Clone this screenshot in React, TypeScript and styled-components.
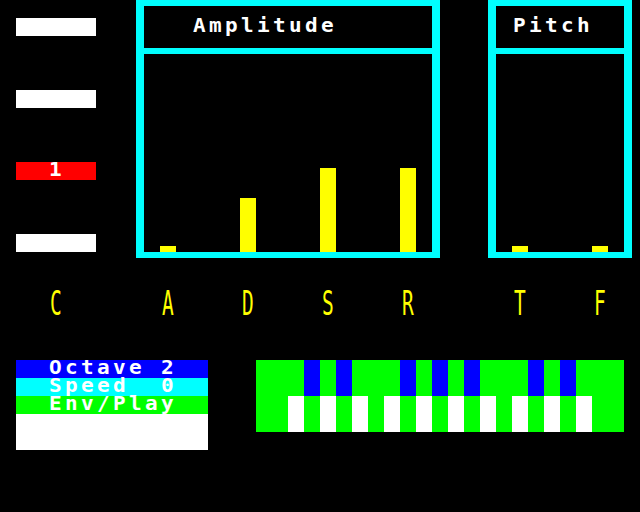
import React from "react";
import styled, { createGlobalStyle, css } from "styled-components";

const Global = createGlobalStyle`
  html, body { margin: 0; padding: 0; background: #000; }
`;

const CYAN = "#00ffff";
const YELLOW = "#ffff00";
const RED = "#ff0000";
const BLUE = "#0000ff";
const GREEN = "#00ff00";
const WHITE = "#ffffff";

type Place = { $col: number; $row: number; $w?: number; $h?: number };

const place = css<Place>`
  grid-column: ${(p) => p.$col + 1} / span ${(p) => p.$w ?? 1};
  grid-row: ${(p) => p.$row + 1} / span ${(p) => p.$h ?? 1};
`;

const Screen = styled.div`
  display: grid;
  grid-template-columns: repeat(40, 16px);
  grid-template-rows: repeat(28, 18px);
  width: 640px;
  height: 512px;
  overflow: hidden;
  background: #000;
  color: ${WHITE};
  font-family: "DejaVu Sans Mono", "Liberation Mono", monospace;
  font-size: 15px;
  line-height: 18px;
  white-space: pre;
`;

/* teletext-like glyph run: 16px cells, wide chunky characters */
const Glyphs = styled.span<{ $bold?: boolean }>`
  display: block;
  height: 18px;
  letter-spacing: 2.4px;
  font-weight: ${(p) => (p.$bold === false ? "normal" : "bold")};
  transform: scale(1.4, 1.28);
  transform-origin: 0 14px;
`;

const TallGlyph = styled.span`
  display: block;
  height: 18px;
  font-weight: normal;
  transform: scale(1.3, 2.28);
  transform-origin: 0 4.2px;
`;

const LevelBar = styled.div<Place & { $active?: boolean }>`
  ${place};
  background: ${(p) => (p.$active ? RED : WHITE)};
  color: ${WHITE};
  padding-left: 33px;
`;

const Panel = styled.div<Place>`
  ${place};
  display: flex;
  flex-direction: column;
  padding: 0 8px 12px;
`;

const Frame = styled.div`
  flex: 1;
  display: flex;
  flex-direction: column;
  border: 6px solid ${CYAN};
  border-left-width: 8px;
  border-right-width: 8px;
`;

const Header = styled.div<{ $indent: number }>`
  box-sizing: border-box;
  height: 48px;
  padding-top: 12px;
  padding-left: ${(p) => p.$indent + 1}px;
  border-bottom: 6px solid ${CYAN};
`;

const Chart = styled.div`
  flex: 1;
  display: flex;
  align-items: flex-end;
  gap: 64px;
  padding-left: 16px;
`;

const Bar = styled.div<{ $height: number }>`
  width: 16px;
  height: ${(p) => p.$height}px;
  background: ${YELLOW};
`;

const Letter = styled.div<Place>`
  ${place};
  color: ${YELLOW};
  padding-left: 2px;
`;

const Menu = styled.div<Place>`
  ${place};
  display: flex;
  flex-direction: column;
`;

const MenuItem = styled.div<{ $bg: string }>`
  height: 18px;
  background: ${(p) => p.$bg};
  padding-left: 33px;
`;

const MenuBlank = styled.div`
  flex: 1;
  background: ${WHITE};
`;

const Keyboard = styled.div<Place>`
  ${place};
  display: grid;
  grid-template-columns: repeat(23, 16px);
  grid-template-rows: 36px 36px;
  background: ${GREEN};
`;

const Key = styled.div<{ $color: string }>`
  background: ${(p) => p.$color};
`;

const blackKeys = [3, 5, 9, 11, 13, 17, 19];
const whiteKeys = [2, 4, 6, 8, 10, 12, 14, 16, 18, 20];

const letters: [string, number][] = [
  ["C", 3],
  ["A", 10],
  ["D", 15],
  ["S", 20],
  ["R", 25],
  ["T", 32],
  ["F", 37],
];

export default function App() {
  const upper = Array.from({ length: 23 }, (_, i) =>
    blackKeys.includes(i) ? BLUE : GREEN
  );
  const lower = Array.from({ length: 23 }, (_, i) =>
    whiteKeys.includes(i) ? WHITE : GREEN
  );
  return (
    <>
      <Global />
      <Screen>
        <LevelBar $col={1} $row={1} $w={5} />
        <LevelBar $col={1} $row={5} $w={5} />
        <LevelBar $col={1} $row={9} $w={5} $active>
          <Glyphs>1</Glyphs>
        </LevelBar>
        <LevelBar $col={1} $row={13} $w={5} />

        <Panel $col={8} $row={0} $w={20} $h={15}>
          <Frame>
            <Header $indent={48}>
              <Glyphs>Amplitude</Glyphs>
            </Header>
            <Chart>
              <Bar $height={6} />
              <Bar $height={54} />
              <Bar $height={84} />
              <Bar $height={84} />
            </Chart>
          </Frame>
        </Panel>

        <Panel $col={30} $row={0} $w={10} $h={15}>
          <Frame>
            <Header $indent={16}>
              <Glyphs>Pitch</Glyphs>
            </Header>
            <Chart>
              <Bar $height={6} />
              <Bar $height={6} />
            </Chart>
          </Frame>
        </Panel>

        {letters.map(([l, c]) => (
          <Letter key={l} $col={c} $row={16} $h={2}>
            <TallGlyph>{l}</TallGlyph>
          </Letter>
        ))}

        <Menu $col={1} $row={20} $w={12} $h={5}>
          <MenuItem $bg={BLUE}>
            <Glyphs>Octave 2</Glyphs>
          </MenuItem>
          <MenuItem $bg={CYAN}>
            <Glyphs>Speed  0</Glyphs>
          </MenuItem>
          <MenuItem $bg={GREEN}>
            <Glyphs>Env/Play</Glyphs>
          </MenuItem>
          <MenuBlank />
        </Menu>

        <Keyboard $col={16} $row={20} $w={23} $h={4}>
          {upper.map((c, i) => (
            <Key key={"u" + i} $color={c} />
          ))}
          {lower.map((c, i) => (
            <Key key={"l" + i} $color={c} />
          ))}
        </Keyboard>
      </Screen>
    </>
  );
}
